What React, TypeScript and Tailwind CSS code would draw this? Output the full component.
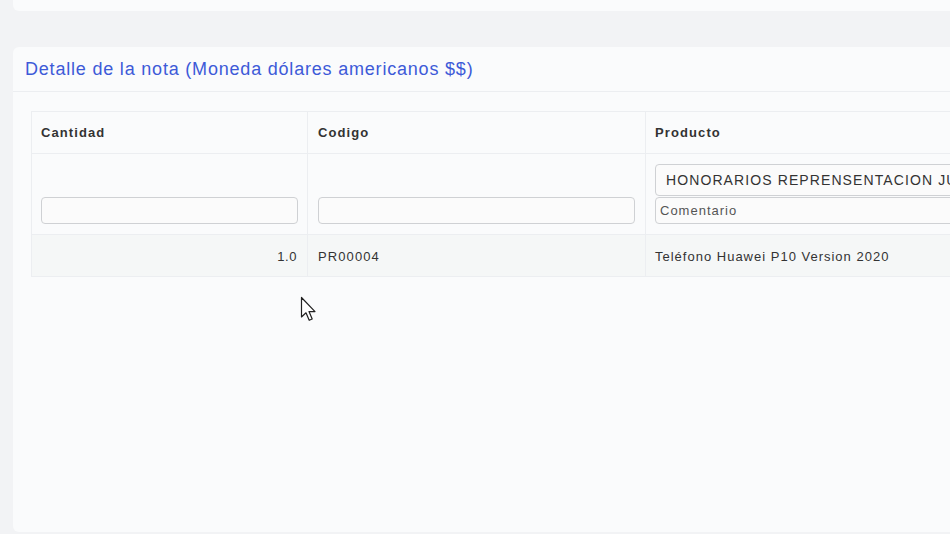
import { useState } from 'react';

const font = { fontFamily: '"Liberation Sans", Arial, sans-serif' };

function Cursor() {
  return (
    <svg
      className="absolute left-[300px] top-[296px] pointer-events-none"
      width="20"
      height="28"
      viewBox="0 0 20 28"
    >
      <path
        d="M1.5 1.5 L1.5 21 L6 16.8 L9.2 24.3 L12.2 23 L9 15.6 L15 15.6 Z"
        fill="#ffffff"
        stroke="#222222"
        strokeWidth="1.2"
        strokeLinejoin="round"
      />
    </svg>
  );
}

export default function App() {
  const [cantidad, setCantidad] = useState('');
  const [codigo, setCodigo] = useState('');
  const [comentario, setComentario] = useState('');

  return (
    <div className="relative h-[534px] w-[950px] overflow-hidden bg-[#f2f3f5]" style={font}>
      <div className="ml-[13px] h-[11px] rounded-bl-md bg-[#fafbfc]" />

      <div className="ml-[13px] mt-[36px] h-[485px] w-[960px] rounded-l-md bg-[#fafbfc]">
        <div className="flex h-[45px] items-center border-b border-[#eceef1] px-3 pt-px">
          <h2 className="text-[18px] tracking-[0.8px] text-[#3d5ad8]">Detalle de la nota (Moneda dólares americanos $$)</h2>
        </div>

        <div className="pl-[18px] pt-[19px]">
          <table className="w-[1000px] table-fixed border-collapse text-[13px] text-[#333]">
            <colgroup>
              <col className="w-[276px]" />
              <col className="w-[338px]" />
              <col />
            </colgroup>
            <thead>
              <tr className="h-[42px]">
                <th className="border border-[#eceef1] px-[9px] text-left font-bold tracking-[1.1px]">Cantidad</th>
                <th className="border border-[#eceef1] px-[10px] text-left font-bold tracking-[1.1px]">Codigo</th>
                <th className="border border-[#eceef1] px-[9px] text-left font-bold tracking-[1.1px]">Producto</th>
              </tr>
            </thead>
            <tbody>
              <tr className="h-[81px]">
                <td className="border border-[#eceef1] px-[9px] pb-[10px] align-bottom">
                  <input
                    value={cantidad}
                    onChange={(e) => setCantidad(e.target.value)}
                    className="block h-[27px] w-full rounded border border-[#cfd1d4] bg-[#fbfbfb] px-1 outline-none"
                  />
                </td>
                <td className="border border-[#eceef1] px-[10px] pb-[10px] align-bottom">
                  <input
                    value={codigo}
                    onChange={(e) => setCodigo(e.target.value)}
                    className="block h-[27px] w-full rounded border border-[#cfd1d4] bg-[#fbfbfb] px-1 outline-none"
                  />
                </td>
                <td className="border border-[#eceef1] px-[9px] pb-[10px] align-bottom">
                  <div className="flex h-[32px] items-center overflow-hidden whitespace-nowrap rounded border border-[#cfd1d4] bg-[#fbfbfb] px-[10px] text-[14px] tracking-[1.1px] text-[#333]">
                    HONORARIOS REPRENSENTACION JUDICIAL
                  </div>
                  <input
                    value={comentario}
                    onChange={(e) => setComentario(e.target.value)}
                    placeholder="Comentario"
                    className="mt-px block h-[27px] w-full rounded border border-[#cfd1d4] bg-[#fbfbfb] px-1 text-[13px] tracking-[1px] outline-none placeholder:text-[#555]"
                  />
                </td>
              </tr>
              <tr className="h-[42px] bg-[#f5f7f7]">
                <td className="border border-[#eceef1] px-[10px] pt-[2px] text-right tracking-[0.6px]">1.0</td>
                <td className="border border-[#eceef1] px-[10px] pt-[2px] tracking-[1.1px]">PR00004</td>
                <td className="border border-[#eceef1] px-[9px] pt-[2px] tracking-[1px]">Teléfono Huawei P10 Version 2020</td>
              </tr>
            </tbody>
          </table>
        </div>
      </div>

      <Cursor />
    </div>
  );
}
